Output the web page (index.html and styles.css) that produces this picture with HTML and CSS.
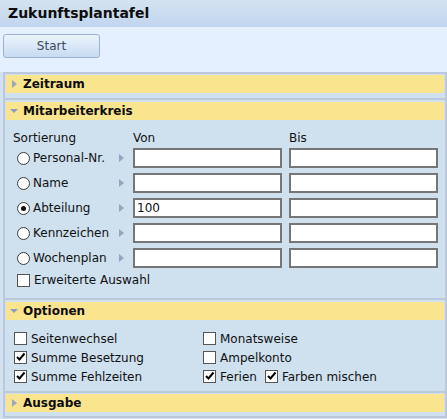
FILE: index.html
```html
<!DOCTYPE html>
<html>
<head>
<meta charset="utf-8">
<link rel="stylesheet" href="styles.css">
</head>
<body>
<div class="titlebar">Zukunftsplantafel</div>
<div class="toolbar"><button class="btn">Start</button></div>
<div class="sections">
  <div class="sec">
    <div class="sec-head"><span class="tri-right"></span>Zeitraum</div>
  </div>
  <div class="sec">
    <div class="sec-head"><span class="tri-down"></span>Mitarbeiterkreis</div>
    <div class="ma-body">
      <div class="ma-grid">
        <div class="cap">Sortierung</div><div class="cap">Von</div><div class="cap">Bis</div>
        <div class="rlabel"><span class="radio"></span><span class="txt">Personal-Nr.</span><span class="arr"></span></div>
        <div class="field"></div><div class="field"></div>
        <div class="rlabel"><span class="radio"></span><span class="txt">Name</span><span class="arr"></span></div>
        <div class="field"></div><div class="field"></div>
        <div class="rlabel"><span class="radio on"></span><span class="txt">Abteilung</span><span class="arr"></span></div>
        <div class="field">100</div><div class="field"></div>
        <div class="rlabel"><span class="radio"></span><span class="txt">Kennzeichen</span><span class="arr"></span></div>
        <div class="field"></div><div class="field"></div>
        <div class="rlabel"><span class="radio"></span><span class="txt">Wochenplan</span><span class="arr"></span></div>
        <div class="field"></div><div class="field"></div>
      </div>
      <div class="ext"><span class="cb"></span><span class="txt">Erweiterte Auswahl</span></div>
    </div>
  </div>
  <div class="sec">
    <div class="sec-head"><span class="tri-down"></span>Optionen</div>
    <div class="opt-body">
      <div class="opt"><span class="cb"></span>Seitenwechsel</div>
      <div class="opt"><span class="cb"></span>Monatsweise</div>
      <div class="opt"><span class="cb"><svg viewBox="0 0 11 11" width="11" height="11"><path d="M2 5 L4.5 7.5 L9.5 1.5" fill="none" stroke="#000" stroke-width="2"/></svg></span>Summe Besetzung</div>
      <div class="opt"><span class="cb"></span>Ampelkonto</div>
      <div class="opt"><span class="cb"><svg viewBox="0 0 11 11" width="11" height="11"><path d="M2 5 L4.5 7.5 L9.5 1.5" fill="none" stroke="#000" stroke-width="2"/></svg></span>Summe Fehlzeiten</div>
      <div class="opt"><span class="cb"><svg viewBox="0 0 11 11" width="11" height="11"><path d="M2 5 L4.5 7.5 L9.5 1.5" fill="none" stroke="#000" stroke-width="2"/></svg></span>Ferien<span class="cb second"><svg viewBox="0 0 11 11" width="11" height="11"><path d="M2 5 L4.5 7.5 L9.5 1.5" fill="none" stroke="#000" stroke-width="2"/></svg></span>Farben mischen</div>
    </div>
  </div>
  <div class="sec">
    <div class="sec-head"><span class="tri-right"></span>Ausgabe</div>
  </div>
</div>
</body>
</html>
```
FILE: styles.css
```css
html, body {
  margin: 0;
  padding: 0;
}
body {
  background: #d3e2f1;
  font-family: "DejaVu Sans", Verdana, sans-serif;
  font-size: 12px;
  color: #111;
  width: 447px;
  height: 419px;
  overflow: hidden;
}
.titlebar {
  height: 27px;
  line-height: 27px;
  padding-left: 8px;
  font-weight: bold;
  font-size: 14px;
  color: #0d0d0d;
  background: linear-gradient(#d4e3f0, #c2d5ef);
}
.toolbar {
  height: 45px;
  box-sizing: border-box;
  padding: 7px 3px 0;
  background: #e4efff;
}
.btn {
  width: 97px;
  height: 24px;
  margin: 0;
  padding: 0;
  border: 1px solid #9db2cf;
  border-radius: 3px;
  background: linear-gradient(#ebf4fd, #c7dbf1);
  font-family: "DejaVu Sans", Verdana, sans-serif;
  font-size: 12px;
  color: #3a4a60;
}
.sections {
  margin-left: 3px;
  width: 444px;
  box-sizing: border-box;
  border: 2px solid #bdc8dc;
  background: #cfe0ef;
}
.sec {
  padding: 2px 1px 5px;
  border-top: 2px solid #bdc8dc;
}
.sec:first-child {
  border-top: none;
  padding-top: 1px;
}
.sec:last-child {
  padding-top: 1px;
  padding-bottom: 4px;
}
.sec-head {
  height: 18px;
  background: #fae58f;
  display: flex;
  align-items: center;
  font-weight: bold;
  color: #0d0d0d;
  padding-left: 4px;
}
.tri-right {
  width: 0;
  height: 0;
  border-top: 4px solid transparent;
  border-bottom: 4px solid transparent;
  border-left: 5px solid #9ba7be;
  margin-left: 2px;
  margin-right: 6px;
}
.tri-down {
  width: 0;
  height: 0;
  border-left: 4px solid transparent;
  border-right: 4px solid transparent;
  border-top: 4px solid #8e9cbb;
  margin-right: 5px;
}
.ma-body {
  padding: 11px 0 5px 7px;
}
.ma-grid {
  display: grid;
  grid-template-columns: 113px 149px 149px;
  grid-template-rows: 12px repeat(5, 20px);
  column-gap: 7px;
  row-gap: 5px;
}
.cap {
  line-height: 14px;
}
.rlabel {
  display: flex;
  align-items: center;
}
.radio {
  width: 13px;
  height: 13px;
  box-sizing: border-box;
  border: 1px solid #3c3c3c;
  border-radius: 50%;
  background: #fff;
  margin-left: 4px;
  margin-right: 3px;
  display: flex;
  align-items: center;
  justify-content: center;
}
.radio.on::after {
  content: "";
  width: 5px;
  height: 5px;
  border-radius: 50%;
  background: #111;
}
.arr {
  margin-left: auto;
  margin-right: 2px;
  width: 0;
  height: 0;
  border-top: 4px solid transparent;
  border-bottom: 4px solid transparent;
  border-left: 5px solid #97a3bd;
}
.field {
  box-sizing: border-box;
  height: 20px;
  border: 2px solid #767676;
  background: #fff;
  padding-left: 2px;
  line-height: 16px;
  color: #111;
}
.ext {
  margin-top: 4px;
  height: 16px;
  display: flex;
  align-items: center;
}
.cb {
  width: 13px;
  height: 13px;
  box-sizing: border-box;
  border: 1px solid #555;
  background: #fff;
  display: inline-flex;
  align-items: center;
  justify-content: center;
  flex: none;
}
.ext .cb {
  margin-left: 4px;
  margin-right: 4px;
}
.opt-body {
  padding: 9px 0 0 8px;
  display: grid;
  grid-template-columns: 189px 1fr;
  grid-auto-rows: 19px;
}
.opt {
  display: flex;
  align-items: center;
}
.opt .cb {
  margin-right: 4px;
}
.opt .cb.second {
  margin-left: 8px;
}
```
